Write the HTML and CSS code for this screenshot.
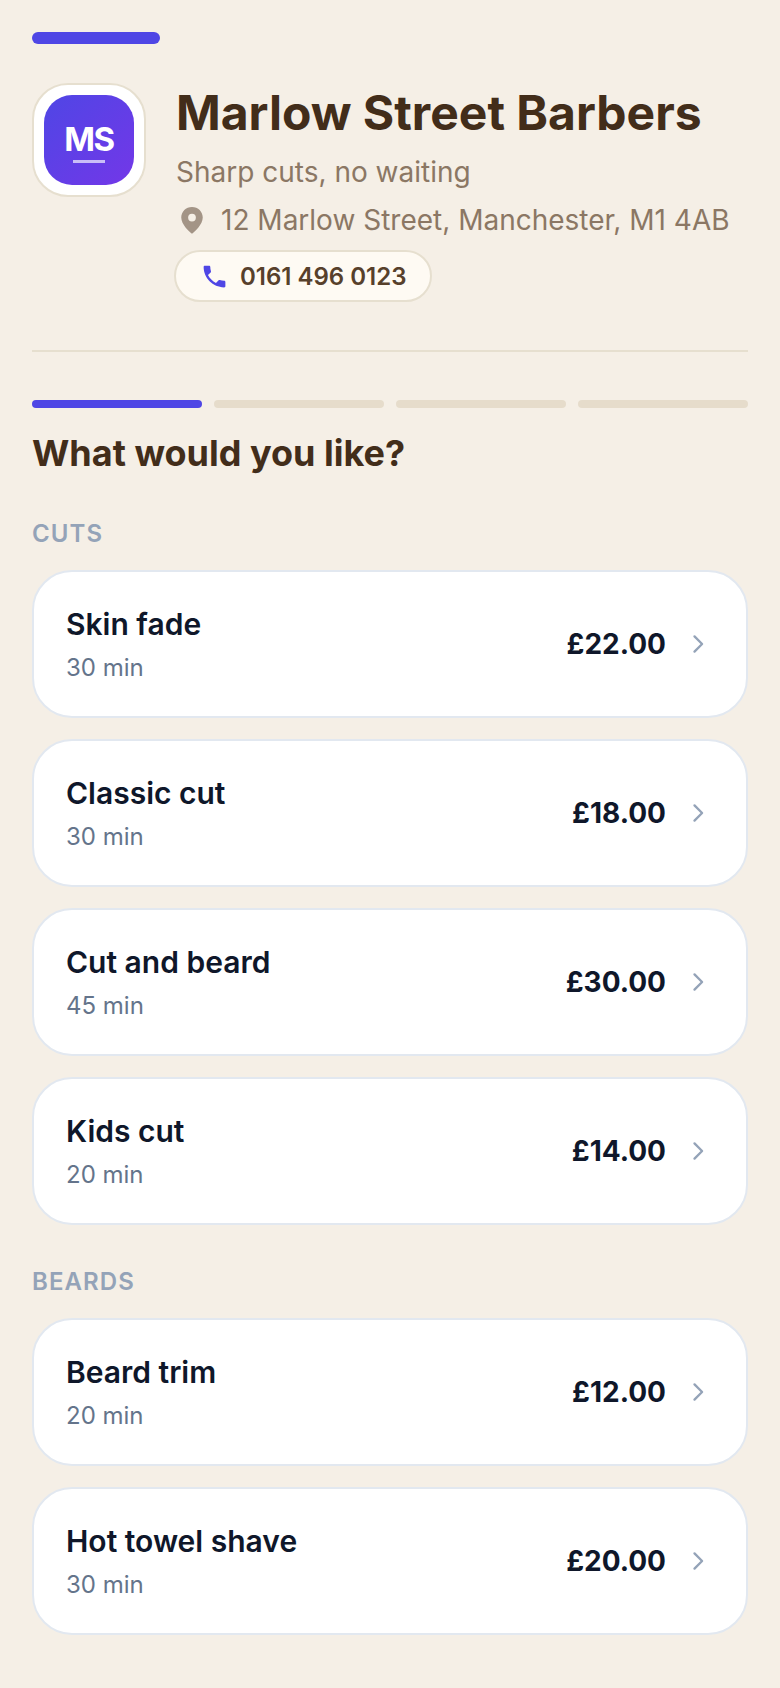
FILE: index.html
```html
<!DOCTYPE html>
<html lang="en">
<head>
    <meta charset="UTF-8">
    <meta name="viewport" content="width=device-width, initial-scale=1.0">
    <title>Marlow Street Barbers</title>
    <link rel="stylesheet" href="styles.css">
</head>
<body>
    <div class="top-bar"></div>

    <header class="shop">
        <div class="logo-frame">
            <div class="logo">
                <span class="logo-text">MS</span>
                <span class="logo-line"></span>
            </div>
        </div>
        <div class="shop-info">
            <h1>Marlow Street Barbers</h1>
            <p class="tagline">Sharp cuts, no waiting</p>
            <p class="address">
                <svg class="pin" viewBox="0 0 24 24" width="30" height="30"><path fill="#a39486" fill-rule="evenodd" d="M12 1.500c-4.900 0-8.600 3.700-8.600 8.500 0 5.600 6.300 11.200 8.600 13 2.300-1.800 8.600-7.400 8.600-13 0-4.800-3.700-8.500-8.600-8.500zm0 5.400a3.100 3.100 0 1 1 0 6.200 3.100 3.100 0 0 1 0-6.200z"/></svg>
                12 Marlow Street, Manchester, M1 4AB
            </p>
            <a class="phone">
                <svg viewBox="0 0 24 24" width="29" height="29"><path fill="#4f46e5" d="M6.620 10.790c1.440 2.830 3.760 5.140 6.590 6.590l2.200-2.200c.270-.270.670-.360 1.020-.240 1.120.370 2.330.570 3.570.570.550 0 1 .450 1 1V20c0 .550-.450 1-1 1C10.610 21 3 13.390 3 4c0-.550.450-1 1-1h3.500c.550 0 1 .450 1 1 0 1.250.200 2.450.570 3.570.110.350.030.740-.250 1.020l-2.200 2.200z"/></svg>
                0161 496 0123
            </a>
        </div>
    </header>

    <hr class="divider">

    <div class="steps">
        <span class="step active"></span>
        <span class="step"></span>
        <span class="step"></span>
        <span class="step"></span>
    </div>

    <h2>What would you like?</h2>

    <h3 class="group-label">CUTS</h3>
    <div class="services">
        <div class="service">
            <div><div class="name">Skin fade</div><div class="time">30 min</div></div>
            <div class="price">£22.00</div>
            <svg class="chev" viewBox="0 0 24 24" width="28" height="28"><path d="M9 5.500l6.500 6.500-6.500 6.500"/></svg>
        </div>
        <div class="service">
            <div><div class="name">Classic cut</div><div class="time">30 min</div></div>
            <div class="price">£18.00</div>
            <svg class="chev" viewBox="0 0 24 24" width="28" height="28"><path d="M9 5.500l6.500 6.500-6.500 6.500"/></svg>
        </div>
        <div class="service">
            <div><div class="name">Cut and beard</div><div class="time">45 min</div></div>
            <div class="price">£30.00</div>
            <svg class="chev" viewBox="0 0 24 24" width="28" height="28"><path d="M9 5.500l6.500 6.500-6.500 6.500"/></svg>
        </div>
        <div class="service">
            <div><div class="name">Kids cut</div><div class="time">20 min</div></div>
            <div class="price">£14.00</div>
            <svg class="chev" viewBox="0 0 24 24" width="28" height="28"><path d="M9 5.500l6.500 6.500-6.500 6.500"/></svg>
        </div>
    </div>

    <h3 class="group-label beards">BEARDS</h3>
    <div class="services">
        <div class="service">
            <div><div class="name">Beard trim</div><div class="time">20 min</div></div>
            <div class="price">£12.00</div>
            <svg class="chev" viewBox="0 0 24 24" width="28" height="28"><path d="M9 5.500l6.500 6.500-6.500 6.500"/></svg>
        </div>
        <div class="service">
            <div><div class="name">Hot towel shave</div><div class="time">30 min</div></div>
            <div class="price">£20.00</div>
            <svg class="chev" viewBox="0 0 24 24" width="28" height="28"><path d="M9 5.500l6.500 6.500-6.500 6.500"/></svg>
        </div>
    </div>
</body>
</html>
```

FILE: styles.css
```css
* {
    box-sizing: border-box;
}
body {
    margin: 0;
    padding: 32px 32px 48px;
    background-color: #f5efe6;
    font-family: Inter, "Liberation Sans", sans-serif;
}
.top-bar {
    width: 128px;
    height: 12px;
    border-radius: 6px;
    background-color: #4f46e5;
}
.shop {
    display: flex;
    gap: 30px;
    margin-top: 39px;
    padding-bottom: 48px;
}
.logo-frame {
    flex: none;
    width: 114px;
    height: 114px;
    padding: 10px;
    border: 2px solid #e6dfcf;
    border-radius: 36px;
    background-color: #fff;
}
.logo {
    display: flex;
    flex-direction: column;
    align-items: center;
    height: 100%;
    padding-top: 29px;
    border-radius: 28px;
    background: linear-gradient(135deg, #4f46e5, #7337e8);
}
.logo-text {
    color: #fff;
    font-size: 33px;
    font-weight: 700;
    line-height: 30px;
    letter-spacing: -1.5px;
}
.logo-line {
    width: 32px;
    height: 3px;
    margin-top: 6px;
    background-color: #c9bdf7;
}
.shop-info {
    min-width: 0;
}
h1 {
    margin: 1px 0 0;
    color: #422d1a;
    font-size: 48px;
    font-weight: 700;
    line-height: 58px;
}
.tagline {
    margin: 13px 0 0;
    color: #8b7764;
    font-size: 28px;
    line-height: 34px;
}
.address {
    display: flex;
    align-items: center;
    gap: 14px;
    margin: 14px 0 0;
    color: #8b7764;
    font-size: 28px;
    line-height: 34px;
    white-space: nowrap;
}
.pin {
    margin-left: 1px;
}
.phone {
    display: inline-flex;
    align-items: center;
    gap: 11px;
    height: 52px;
    margin-top: 13px;
    margin-left: -2px;
    padding: 0 24px;
    border: 2px solid #e6dfcf;
    border-radius: 26px;
    background-color: #fefaf3;
    color: #57402b;
    font-size: 24px;
    font-weight: 600;
}
.divider {
    height: 2px;
    margin: 0;
    border: 0;
    background-color: #e6dfcf;
}
.steps {
    display: flex;
    gap: 12px;
    margin-top: 48px;
}
.step {
    flex: 1;
    height: 8px;
    border-radius: 4px;
    background-color: #e6dccb;
}
.step.active {
    background-color: #4f46e5;
}
h2 {
    margin: 23px 0 0;
    color: #422d1a;
    font-size: 36px;
    font-weight: 700;
    line-height: 44px;
}
.group-label {
    margin: 44px 0 0;
    color: #94a3b8;
    font-size: 24px;
    font-weight: 600;
    line-height: 30px;
    letter-spacing: 1.1px;
}
.group-label.beards {
    margin-top: 42px;
}
.services {
    display: flex;
    flex-direction: column;
    gap: 21px;
    margin-top: 21px;
}
.service {
    display: flex;
    align-items: center;
    height: 148px;
    padding: 0 34px 0 32px;
    border: 2px solid #e2e8f0;
    border-radius: 40px;
    background-color: #fff;
}
.service > div:first-child {
    flex: 1;
}
.name {
    color: #0f172a;
    font-size: 30px;
    font-weight: 600;
    line-height: 38px;
}
.time {
    margin-top: 10px;
    color: #64748b;
    font-size: 24px;
    line-height: 30px;
}
.price {
    color: #0f172a;
    font-size: 28px;
    font-weight: 700;
}
.chev {
    margin-left: 18px;
}
.chev path {
    fill: none;
    stroke: #94a3b8;
    stroke-width: 2;
    stroke-linecap: round;
    stroke-linejoin: round;
}
```
